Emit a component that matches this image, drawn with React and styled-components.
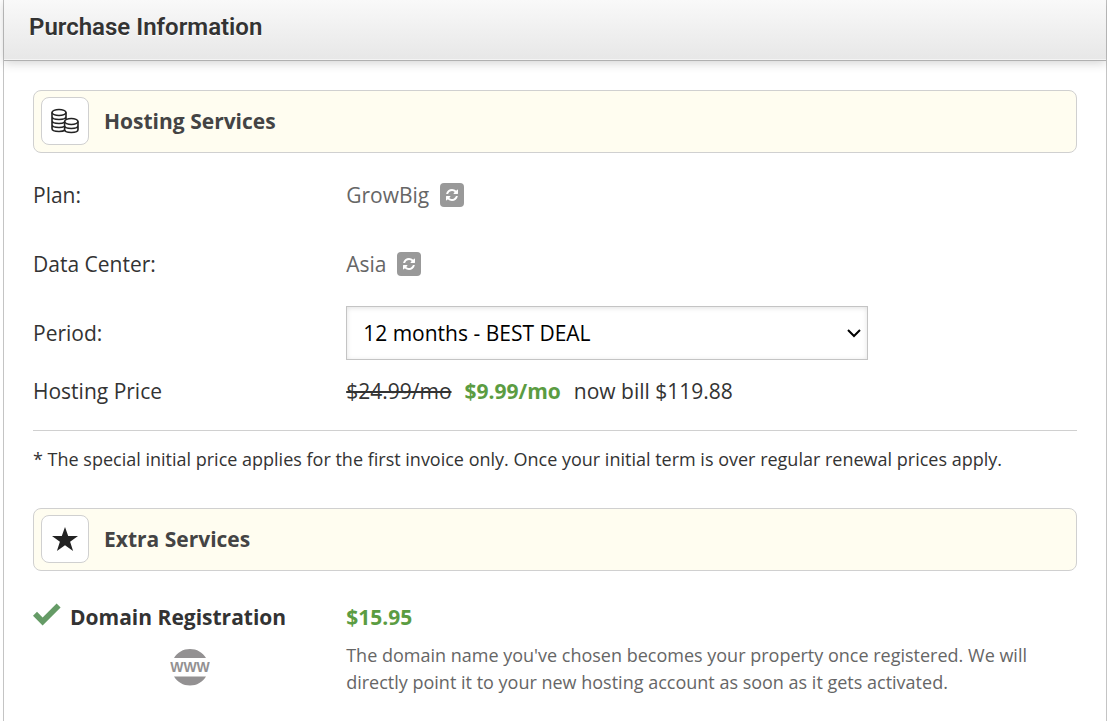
import React from 'react';
import styled, { createGlobalStyle } from 'styled-components';

const GlobalStyle = createGlobalStyle`
  *, *::before, *::after { box-sizing: border-box; }
  body {
    margin: 0;
    background: #fff;
    color: #333;
    font-family: "Open Sans", "Noto Sans", sans-serif;
    font-size: 21px;
    font-weight: 400;
    line-height: 28px;
  }
`;

const Panel = styled.main`
  min-height: 100vh;
  margin-left: 3px;
  border: solid #c4c4c4;
  border-width: 0 1px;
`;

const Header = styled.header`
  padding: 12px 25px 18px;
  background: linear-gradient(#f9f9f9, #e7e7e7);
  border-bottom: 1px solid #b0b0b0;
  box-shadow: inset 0 -1px 0 #f4f4f4, 0 2px 10px rgba(0, 0, 0, 0.18);
`;

const Title = styled.h1`
  margin: 0;
  font: 600 24px/30px Roboto, sans-serif;
  text-shadow: 0 1px 0 #fff;
`;

const Content = styled.div`
  padding: 29px 29px 20px;
`;

const SectionBar = styled.div`
  display: flex;
  align-items: center;
  gap: 15px;
  padding: 6px 7px 7px;
  margin-bottom: 7px;
  background: #fffdf0;
  border: 1px solid #d0d0d0;
  border-radius: 8px;
`;

const IconTile = styled.span`
  display: grid;
  place-items: center;
  width: 48px;
  height: 48px;
  background: #fff;
  border: 1px solid #d0d0d0;
  border-radius: 8px;
`;

const SectionTitle = styled.h2`
  margin: 0;
  color: #444;
  font-size: 21px;
  font-weight: 700;
  line-height: 28px;
`;

const Row = styled.div`
  display: grid;
  grid-template-columns: 30% 1fr;
  align-items: center;
  min-height: ${(p) => (p.$compact ? 47 : 69)}px;
`;

const Value = styled.div`
  display: flex;
  align-items: center;
  gap: ${(p) => p.$gap || 11}px;
  color: ${(p) => (p.$muted ? '#666' : '#333')};
`;

const ChangeButton = styled.button`
  display: grid;
  place-items: center;
  width: 24px;
  height: 24px;
  padding: 0;
  border: 0;
  border-radius: 4px;
  background: #999;
  cursor: pointer;
`;

const SelectWrap = styled.div`
  display: grid;
  align-items: center;
  width: calc(500% / 7);
  & > * { grid-area: 1 / 1; }
  & > svg { justify-self: end; margin-right: 6px; pointer-events: none; }
`;

const Select = styled.select`
  appearance: none;
  width: 100%;
  height: 54px;
  padding: 0 32px 0 16px;
  border: 1px solid #c4c4c4;
  border-radius: 0;
  background: #fff;
  box-shadow: inset 0 1px 5px rgba(0, 0, 0, 0.12);
  color: #000;
  font: inherit;
`;

const Price = styled.strong`
  color: #5b9c42;
  font-weight: 700;
`;

const Note = styled.p`
  margin: 16px 0 35px;
  padding-top: 15px;
  border-top: 1px solid #d0d0d0;
  font-size: 18px;
  line-height: 27px;
`;

const Extra = styled.section`
  display: grid;
  grid-template-columns: 30% 1fr;
  padding-top: 25px;
`;

const ExtraName = styled.h3`
  display: flex;
  align-items: center;
  gap: 9px;
  margin: 0 0 17px;
  font-size: 21px;
  font-weight: 700;
  line-height: 28px;
`;

const Picture = styled.div`
  display: flex;
  justify-content: center;
`;

const Description = styled.p`
  max-width: 700px;
  margin: 11px 0 0;
  color: #666;
  font-size: 18px;
  line-height: 27px;
`;

const CoinsIcon = () => (
  <svg width="28" height="26" viewBox="0 0 28 26" fill="none" stroke="#222" strokeWidth="1.6" aria-hidden="true">
    <ellipse cx="8" cy="4.500" rx="7" ry="3" />
    <path d="M1 4.500v16c0 1.800 3 3 7 3 2.700 0 5-.6 6.200-1.500M15 4.500v7M1 8.500c0 1.800 3 3 7 3s7-1.200 7-3M1 12.500c0 1.800 3 3 7 3 2.200 0 4.200-.4 5.500-1.100M1 16.500c0 1.800 3 3 7 3 2.200 0 4.200-.4 5.500-1.100" />
    <ellipse cx="20.300" cy="13.500" rx="6.700" ry="3" />
    <path d="M13.600 13.500v8c0 1.800 3 3 6.700 3s6.700-1.200 6.700-3v-8M13.600 17.500c0 1.800 3 3 6.700 3s6.700-1.200 6.700-3" />
  </svg>
);

const StarIcon = () => (
  <svg width="28" height="26" viewBox="0 0 28 26" fill="#222" aria-hidden="true">
    <path d="M14 1l3.200 9H27l-7.900 5.800 3 9.200-8.100-5.700L5.900 25l3-9.200L1 10h9.800z" />
  </svg>
);

const RefreshIcon = () => (
  <svg width="12" height="12" viewBox="0 0 1536 1536" fill="#fff" aria-hidden="true">
    <path d="M1511 928q0 5-1 7-64 268-268 434.500T764 1536q-146 0-282.500-55T238 1324l-129 129q-19 19-45 19t-45-19-19-45V960q0-26 19-45t45-19h448q26 0 45 19t19 45-19 45l-137 137q71 66 161 102t187 36q134 0 250-65t186-179q11-17 53-117 8-23 30-23h192q13 0 22.500 9.500t9.500 22.500zm25-800v448q0 26-19 45t-45 19h-448q-26 0-45-19t-19-45 19-45l138-138Q969 256 768 256q-134 0-250 65T332 500q-11 17-53 117-8 23-30 23H50q-13 0-22.500-9.500T18 608v-7q65-268 270-434.500T768 0q146 0 284 55.500T1297 212l130-129q19-19 45-19t45 19 19 45z" />
  </svg>
);

const ChevronIcon = () => (
  <svg width="16" height="16" viewBox="0 0 16 16" fill="none" stroke="#000" strokeWidth="2" aria-hidden="true">
    <path d="M2 5l6 6 6-6" />
  </svg>
);

const CheckIcon = () => (
  <svg width="28" height="28" viewBox="0 0 28 28" fill="#659b66" aria-hidden="true">
    <path d="M0 12.800l4-4 5.600 5.600L23.600 .6l4 4L9.600 22.400z" />
  </svg>
);

const WwwIcon = () => (
  <svg width="40" height="38" viewBox="0 0 40 38" fill="#939192" role="img" aria-label="Domain">
    <path d="M4 10C7.300 4.400 13.200 1 20 1s12.700 3.400 16 9zM4 28.500c3.300 5.600 9.200 9 16 9s12.700-3.400 16-9z" />
    <text x="20" y="24" textAnchor="middle" fontFamily="Liberation Sans, sans-serif" fontSize="14" fontWeight="700">WWW</text>
  </svg>
);

export default function App() {
  return (
    <>
      <GlobalStyle />
      <Panel>
        <Header>
          <Title>Purchase Information</Title>
        </Header>
        <Content>
          <SectionBar>
            <IconTile><CoinsIcon /></IconTile>
            <SectionTitle>Hosting Services</SectionTitle>
          </SectionBar>
          <Row>
            <span>Plan:</span>
            <Value $muted>
              GrowBig
              <ChangeButton type="button" aria-label="Change plan"><RefreshIcon /></ChangeButton>
            </Value>
          </Row>
          <Row>
            <span>Data Center:</span>
            <Value $muted>
              Asia
              <ChangeButton type="button" aria-label="Change data center"><RefreshIcon /></ChangeButton>
            </Value>
          </Row>
          <Row>
            <label htmlFor="period">Period:</label>
            <SelectWrap>
              <Select id="period" defaultValue="12">
                <option value="12">12 months - BEST DEAL</option>
              </Select>
              <ChevronIcon />
            </SelectWrap>
          </Row>
          <Row $compact>
            <span>Hosting Price</span>
            <Value $gap={13}>
              <s>$24.99/mo</s>
              <Price>$9.99/mo</Price>
              <span>now bill $119.88</span>
            </Value>
          </Row>
          <Note>
            * The special initial price applies for the first invoice only. Once your initial term is over regular renewal prices apply.
          </Note>
          <SectionBar>
            <IconTile><StarIcon /></IconTile>
            <SectionTitle>Extra Services</SectionTitle>
          </SectionBar>
          <Extra>
            <div>
              <ExtraName><CheckIcon />Domain Registration</ExtraName>
              <Picture><WwwIcon /></Picture>
            </div>
            <div>
              <Price>$15.95</Price>
              <Description>
                The domain name you've chosen becomes your property once registered. We will directly point it to your new hosting account as soon as it gets activated.
              </Description>
            </div>
          </Extra>
        </Content>
      </Panel>
    </>
  );
}
